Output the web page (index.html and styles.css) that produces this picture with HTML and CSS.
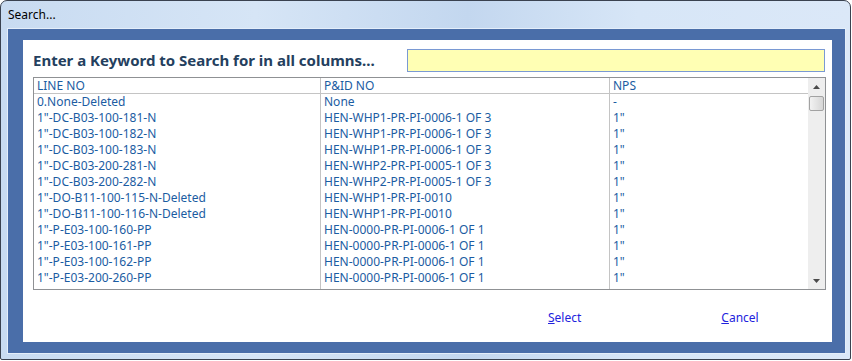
FILE: index.html
```html
<!DOCTYPE html>
<html>
<head>
<meta charset="utf-8">
<link rel="stylesheet" href="styles.css">
</head>
<body>
<div class="window">
  <div class="titlebar">Search...</div>
  <div class="client">
    <div class="panel">
      <div class="searchrow">
        <div class="prompt">Enter a Keyword to Search for in all columns...</div>
        <div class="searchbox"></div>
      </div>
      <div class="table">
        <div class="grid">
          <div class="cell head c1">LINE NO</div><div class="cell head c2">P&amp;ID NO</div><div class="cell head c3">NPS</div>
          <div class="cell c1">0.None-Deleted</div><div class="cell c2">None</div><div class="cell c3">-</div>
          <div class="cell c1">1"-DC-B03-100-181-N</div><div class="cell c2">HEN-WHP1-PR-PI-0006-1 OF 3</div><div class="cell c3">1"</div>
          <div class="cell c1">1"-DC-B03-100-182-N</div><div class="cell c2">HEN-WHP1-PR-PI-0006-1 OF 3</div><div class="cell c3">1"</div>
          <div class="cell c1">1"-DC-B03-100-183-N</div><div class="cell c2">HEN-WHP1-PR-PI-0006-1 OF 3</div><div class="cell c3">1"</div>
          <div class="cell c1">1"-DC-B03-200-281-N</div><div class="cell c2">HEN-WHP2-PR-PI-0005-1 OF 3</div><div class="cell c3">1"</div>
          <div class="cell c1">1"-DC-B03-200-282-N</div><div class="cell c2">HEN-WHP2-PR-PI-0005-1 OF 3</div><div class="cell c3">1"</div>
          <div class="cell c1">1"-DO-B11-100-115-N-Deleted</div><div class="cell c2">HEN-WHP1-PR-PI-0010</div><div class="cell c3">1"</div>
          <div class="cell c1">1"-DO-B11-100-116-N-Deleted</div><div class="cell c2">HEN-WHP1-PR-PI-0010</div><div class="cell c3">1"</div>
          <div class="cell c1">1"-P-E03-100-160-PP</div><div class="cell c2">HEN-0000-PR-PI-0006-1 OF 1</div><div class="cell c3">1"</div>
          <div class="cell c1">1"-P-E03-100-161-PP</div><div class="cell c2">HEN-0000-PR-PI-0006-1 OF 1</div><div class="cell c3">1"</div>
          <div class="cell c1">1"-P-E03-100-162-PP</div><div class="cell c2">HEN-0000-PR-PI-0006-1 OF 1</div><div class="cell c3">1"</div>
          <div class="cell c1">1"-P-E03-200-260-PP</div><div class="cell c2">HEN-0000-PR-PI-0006-1 OF 1</div><div class="cell c3">1"</div>
          <div class="cell c1"></div><div class="cell c2"></div><div class="cell c3"></div>
        </div>
        <div class="vscroll">
          <div class="arrow"><svg width="7" height="4" viewBox="0 0 7 4"><path d="M0 4 L3.5 0 L7 4 Z" fill="#4a4a4a"/></svg></div>
          <div class="thumb"></div>
          <div class="track"></div>
          <div class="arrow"><svg width="7" height="4" viewBox="0 0 7 4"><path d="M0 0 L7 0 L3.5 4 Z" fill="#4a4a4a"/></svg></div>
        </div>
      </div>
      <div class="buttons">
        <span class="btn btn-select"><u>S</u>elect</span>
        <span class="btn btn-cancel"><u>C</u>ancel</span>
      </div>
    </div>
  </div>
</div>
</body>
</html>
```
FILE: styles.css
```css
html, body {
  margin: 0;
  padding: 0;
  background: #ffffff;
}
.window {
  box-sizing: border-box;
  width: 851px;
  height: 360px;
  border: 1px solid #3a4250;
  border-radius: 7px 7px 2px 2px;
  background: linear-gradient(90deg, #c8dbf1 0%, #d6e5f6 30%, #c3d7ef 55%, #d7e6f7 75%, #dbe8f8 100%);
  padding: 0 5px 6px 7px;
  display: flex;
  flex-direction: column;
  font-family: "Noto Sans", "Open Sans", sans-serif;
}
.titlebar {
  height: 28px;
  line-height: 28px;
  font-size: 12px;
  color: #000;
  flex: none;
}
.client {
  flex: 1;
  background: #4a6ea9;
  padding: 11px 13px 11px 15px;
  box-shadow: 0 0 0 1px #e4eefa;
  display: flex;
}
.panel {
  flex: 1;
  background: #ffffff;
  display: flex;
  flex-direction: column;
}
.searchrow {
  height: 37px;
  display: flex;
  align-items: center;
  padding-left: 10px;
  flex: none;
}
.prompt {
  width: 374px;
  font-size: 15px;
  font-weight: bold;
  color: #24405e;
  padding-top: 2px;
  white-space: nowrap;
}
.searchbox {
  box-sizing: border-box;
  width: 418px;
  height: 23px;
  margin-top: 4px;
  border: 1px solid #7a99d3;
  background: #ffffb4;
}
.table {
  margin-left: 10px;
  width: 793px;
  height: 213px;
  box-sizing: border-box;
  border: 1px solid #8f9194;
  display: flex;
  flex: none;
}
.grid {
  flex: 1;
  display: grid;
  grid-template-columns: 287px 289px 198px;
  grid-template-rows: 16px repeat(12, 16px) 1fr;
}
.cell {
  font-size: 12px;
  line-height: 16px;
  color: #1b5ca2;
  padding-left: 3px;
  white-space: nowrap;
  overflow: hidden;
}
.c1, .c2 {
  border-right: 1px solid #c4c4c4;
}
.head {
  border-bottom: 1px solid #c4c4c4;
  line-height: 15px;
}
.vscroll {
  width: 17px;
  display: flex;
  flex-direction: column;
  background: #eeeeee;
}
.arrow {
  height: 17px;
  display: flex;
  align-items: center;
  justify-content: center;
  flex: none;
}
.thumb {
  height: 15px;
  margin: 1px 1px 0 1px;
  box-sizing: border-box;
  border: 1px solid #a2a2a2;
  border-radius: 2px;
  background: linear-gradient(90deg, #f2f2f2 0%, #e4e4e4 50%, #d6d6d6 100%);
  flex: none;
}
.track {
  flex: 1;
}
.buttons {
  flex: 1;
  display: flex;
  align-items: center;
  padding-top: 2px;
}
.btn {
  font-size: 12px;
  color: #2222dd;
}
.btn-select {
  margin-left: 525px;
}
.btn-cancel {
  margin-left: 140px;
}
```
